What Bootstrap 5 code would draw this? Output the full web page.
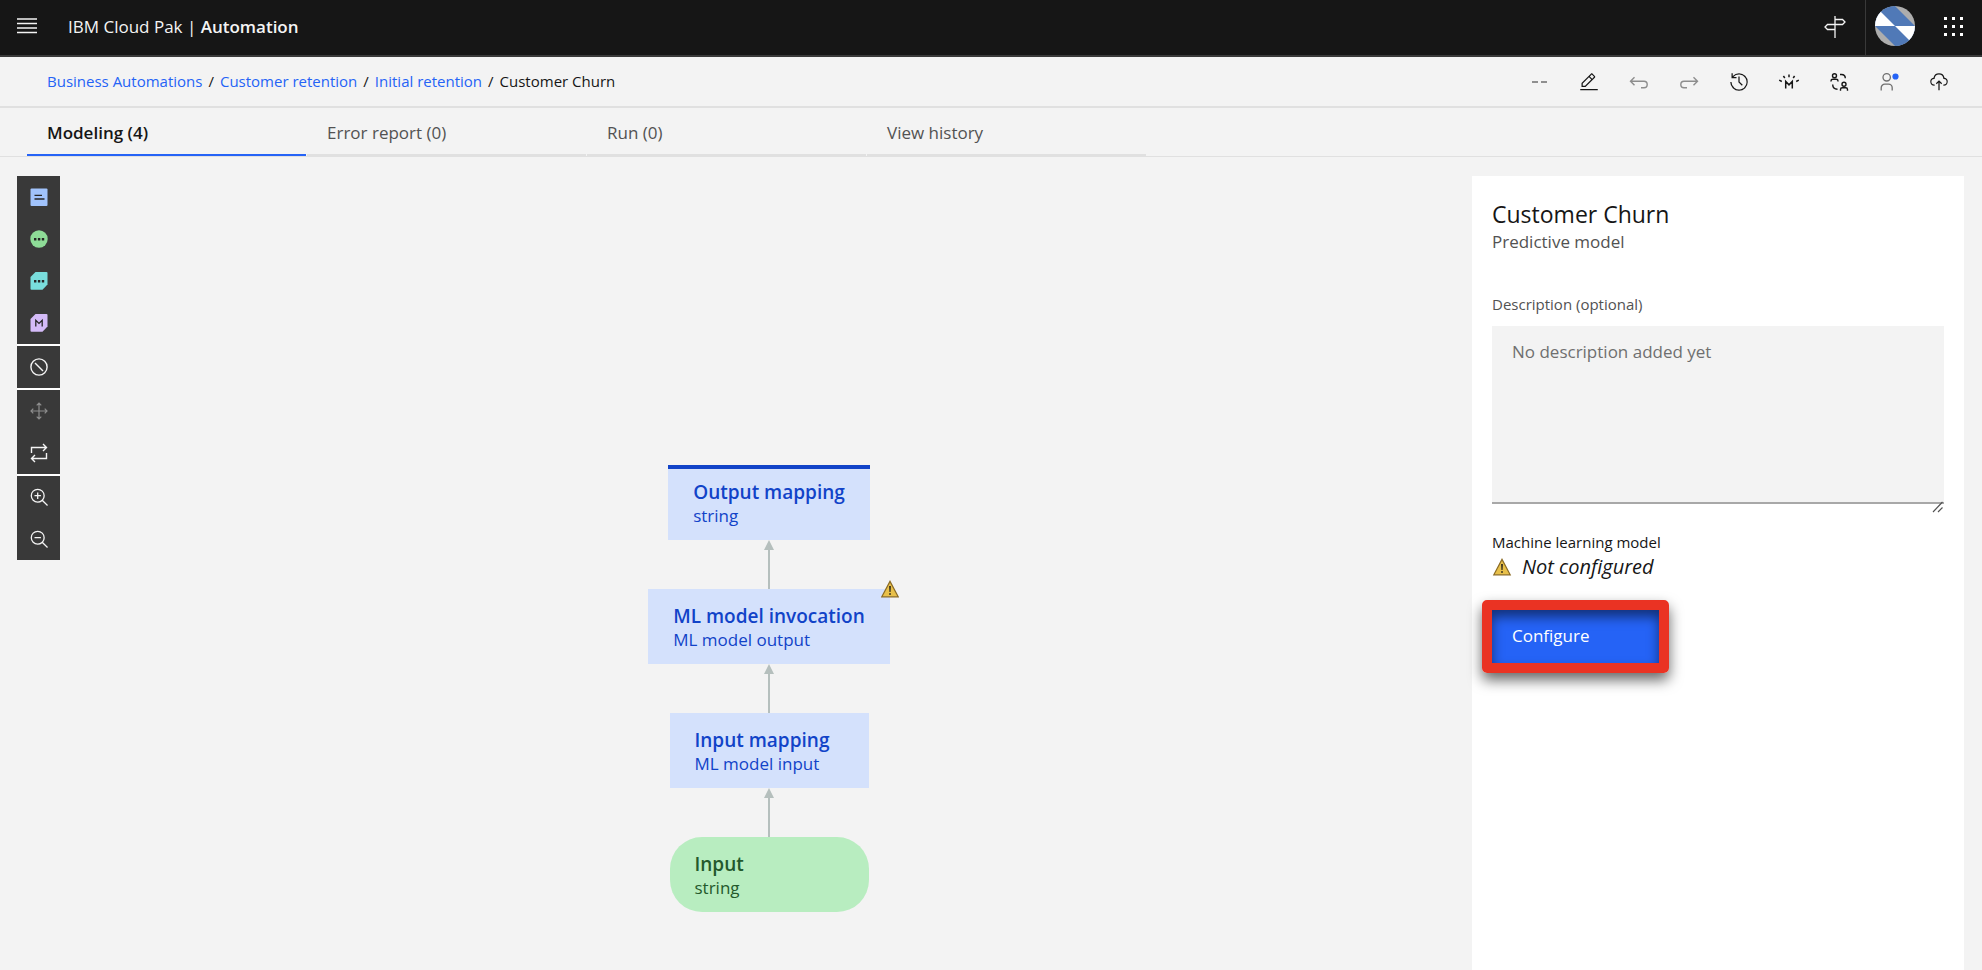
<!DOCTYPE html>
<html lang="en">
<head>
<meta charset="utf-8">
<meta name="viewport" content="width=device-width, initial-scale=1">
<title>Customer Churn - Automation</title>
<link href="https://cdn.jsdelivr.net/npm/bootstrap@5.3.0/dist/css/bootstrap.min.css" rel="stylesheet">
<script src="https://cdn.jsdelivr.net/npm/bootstrap@5.3.0/dist/js/bootstrap.bundle.min.js" defer></script>
<style>
:root { --ink: #161616; --muted: #525252; --line: #e0e0e0; --blue: #2563f6; --dark-blue: #1143c8; }
body { font-family: "Open Sans", "Noto Sans", sans-serif; font-size: 17px; line-height: 24px; color: var(--ink); background: #f3f3f3; }
svg { display: block; flex: none; }
.stroked { fill: none; stroke: currentColor; }
.icon-btn { border: 0; padding: 0; background: none; color: inherit; display: flex; align-items: center; justify-content: center; }
.icon-btn:disabled { color: #8d8d8d; }

.topbar { background: #161616; color: #f4f4f4; border-bottom: 2px solid #393939; }
.topbar .icon-btn { width: 60px; height: 55px; padding-bottom: 3px; }
.topbar .menu-btn { width: 54px; }
.topbar .avatar-btn { border-left: 1px solid #393939; width: 59px; }
.topbar .apps-btn { width: 58px; }
.product { color: #f4f4f4; padding: 0 14px 2px; }
.product b { font-weight: 600; }

.crumbs { height: 51px; border-bottom: 2px solid var(--line); padding: 0 18px 0 47px; }
.breadcrumb { font-size: 15px; padding-bottom: 2px; --bs-breadcrumb-item-padding-x: 6px; --bs-breadcrumb-divider-color: #161616; --bs-breadcrumb-item-active-color: #161616; }
.breadcrumb a { color: var(--blue); text-decoration: none; }
.actions .icon-btn, .actions .no-value { width: 50px; height: 40px; }
.no-value { color: #6f6f6f; }

.tabbar { border-bottom: 1px solid var(--line); padding-left: 27px; gap: 1px; }
.tabbar .nav-link { width: 279px; height: 48px; background: none; border-radius: 0; border: 0; border-bottom: 2px solid var(--line); color: var(--muted); text-align: left; padding: 4px 20px 0; }
.tabbar .nav-link.active { color: var(--ink); font-weight: 600; border-bottom-color: var(--blue); }

.work { padding: 19px 18px 0 17px; }
.palette { width: 43px; background: #fff; gap: 2px; margin-right: 6px; }
.palette > div { background: #393939; color: #f4f4f4; }
.palette .icon-btn { width: 43px; height: 42px; }

.canvas { padding-bottom: 58px; }
.node { padding: 15px 25px 0; height: 75px; min-width: 199px; background: #d4e1fc; color: var(--dark-blue); }
.node strong { display: block; font-size: 19px; font-weight: 600; }
.node-output { border-top: 4px solid var(--dark-blue); padding-top: 11px; }
.node-input { background: #b8edc0; color: #24592c; border-radius: 32px; }
.node-warning { position: absolute; top: -9px; right: -9px; }

.inspector { width: 492px; background: #fff; padding: 22px 20px; }
.inspector h1 { font-size: 23px; line-height: 32px; margin: 0; }
.quiet { color: var(--muted); }
.caption { font-size: 15px; line-height: 20px; }
.desc-label { margin: 40px 0 12px; }
.desc, .desc:focus { background: #f3f3f3; border: 0; border-bottom: 2px solid #a8a8a8; border-radius: 0; height: 178px; padding: 14px 20px; font-size: 17px; line-height: 24px; resize: none; box-shadow: none; }
.desc::placeholder { color: #6f6f6f; }
.grip { position: absolute; right: 0; bottom: -9px; color: #525252; }
.not-set { font-size: 20px; line-height: 30px; gap: 10px; }
.configure { position: relative; background: var(--blue); color: #fff; border: 0; width: 167px; height: 53px; text-align: left; padding: 0 20px 2px; margin-top: 28px; }
/* call-out frame round the button */
.configure::after { content: ""; position: absolute; inset: -10px; border: 10px solid #ea3323; border-radius: 5px; box-shadow: 0 7px 14px rgba(0,0,0,.6), inset 0 7px 12px rgba(0,0,0,.5); pointer-events: none; }
</style>
</head>
<body class="vh-100 d-flex flex-column overflow-hidden">

<svg width="0" height="0" class="position-absolute" aria-hidden="true">
  <symbol id="warning" viewBox="0 0 18 18"><path d="M9 1.4 17.2 16.8H.8Z" fill="#e8c04a" stroke="#8b6b24" stroke-width="1.2"/><path d="M8.2 6h1.6l-.3 6h-1zM8.2 13.2h1.6v1.6H8.2z" fill="#161616"/></symbol>
</svg>

<header class="topbar d-flex align-items-center">
  <button class="icon-btn menu-btn" type="button" aria-label="Menu"><svg class="stroked" width="20" height="16" stroke-width="1.6"><path d="M0 1h20M0 5.500h20M0 10h20M0 14.500h20"/></svg></button>
  <a class="product text-decoration-none me-auto" href="#">IBM Cloud Pak | <b>Automation</b></a>
  <button class="icon-btn" type="button" aria-label="Guide"><svg class="stroked" width="22" height="24" stroke-width="1.3"><path d="M11 2v22M11 5.5h7.5l2.5 2.5-2.5 2.5H11M11 10.5H3.5L1 13l2.5 2.5H11"/></svg></button>
  <button class="icon-btn avatar-btn" type="button" aria-label="Account">
    <svg width="40" height="40" viewBox="-20 -20 40 40"><clipPath id="disc"><circle r="20"/></clipPath><g clip-path="url(#disc)"><path fill="#adadad" d="M-20-20h40v40h-40z"/><path fill="#5079b7" d="M-20-20H0L20 0H-20zM-20 0H20V20H0z"/><path fill="#fff" d="M-20-20 0 0H-20zM0 0H20V20z"/></g></svg>
  </button>
  <button class="icon-btn apps-btn" type="button" aria-label="App switcher"><svg width="20" height="20" fill="#fff"><path d="M1 1h3v3H1zM9 1h3v3H9zM17 1h3v3h-3zM1 9h3v3H1zM9 9h3v3H9zM17 9h3v3h-3zM1 17h3v3H1zM9 17h3v3H9zM17 17h3v3h-3z"/></svg></button>
</header>

<div class="crumbs d-flex align-items-center justify-content-between">
  <nav aria-label="breadcrumb">
    <ol class="breadcrumb mb-0">
      <li class="breadcrumb-item"><a href="#">Business Automations</a></li>
      <li class="breadcrumb-item"><a href="#">Customer retention</a></li>
      <li class="breadcrumb-item"><a href="#">Initial retention</a></li>
      <li class="breadcrumb-item active" aria-current="page">Customer Churn</li>
    </ol>
  </nav>
  <div class="actions d-flex">
    <span class="no-value d-flex align-items-center justify-content-center"><svg class="stroked" width="16" height="2" stroke-width="1.4"><path d="M1 1h6M10 1h6"/></svg></span>
    <button class="icon-btn" type="button" aria-label="Edit"><svg width="20" height="20" viewBox="0 0 32 32" fill="currentColor"><path d="M2 27h28v2H2zM25.4 9c.8-.8.8-2 0-2.800l-3.600-3.600c-.8-.8-2-.8-2.800 0l-15 15V24h6.400l15-15zM20.400 4 24 7.600l-3 3L17.400 7l3-3zM6 22v-3.600l10-10 3.600 3.600-10 10H6z"/></svg></button>
    <button class="icon-btn" type="button" aria-label="Undo" disabled><svg class="stroked" width="20" height="20" stroke-width="1.4"><path d="M5.500 5.300l-4 4 4 4M1.500 9.300H15a3.200 3.200 0 0 1 0 6.400h-3"/></svg></button>
    <button class="icon-btn" type="button" aria-label="Redo" disabled><svg class="stroked" width="20" height="20" stroke-width="1.4"><path d="M14.500 5.300l4 4-4 4M18.500 9.300H5a3.200 3.200 0 0 0 0 6.400h3"/></svg></button>
    <button class="icon-btn" type="button" aria-label="History"><svg width="20" height="20" viewBox="0 0 32 32" fill="currentColor"><path d="M20.590 22 15 16.410V7h2v8.580l5 5.010zM16 2A13.940 13.940 0 0 0 6 6.230V2H4v8h8V8H7.080A12 12 0 1 1 4 16H2A14 14 0 1 0 16 2z"/></svg></button>
    <button class="icon-btn" type="button" aria-label="Machine learning"><svg class="stroked" width="22" height="20" stroke-width="1.5"><path d="M7.700 16.500V9.400L11 12.800l3.300-3.400v7.100M11 2.500v2.700M5.400 4l1.400 2M16.600 4l-1.400 2M1.200 8.200l2.600 1.300M20.800 8.200l-2.600 1.300"/></svg></button>
    <button class="icon-btn" type="button" aria-label="Collaborate"><svg class="stroked" width="20" height="20" stroke-width="1.4"><circle cx="5.500" cy="3.800" r="2"/><path d="M2 9.500V9c0-1 .8-1.700 1.800-1.700h3.400C8.200 7.300 9 8 9 9v.5"/><circle cx="15" cy="12.300" r="2"/><path d="M11.500 18.800V17.500c0-1 .8-1.700 1.800-1.700h3.400c1 0 1.800.7 1.800 1.700v1.300M11 2.500h1.500c2.200 0 3.800 1.500 3.800 3.800M3.700 12.500c0 2.700 1.600 4.700 4.800 4.700"/></svg></button>
    <button class="icon-btn" type="button" aria-label="Users"><svg class="stroked" width="20" height="20" stroke-width="1.3"><g stroke="#6f6f6f"><circle cx="7.700" cy="5.300" r="3.700"/><path d="M2.200 18.500V15.800a3.600 3.600 0 0 1 3.600-3.600h3.800a3.600 3.600 0 0 1 3.600 3.600v2.700"/></g><circle cx="16.500" cy="4.500" r="3.100" fill="#2563f6" stroke="none"/></svg></button>
    <button class="icon-btn" type="button" aria-label="Publish"><svg width="20" height="20" viewBox="0 0 32 32" fill="currentColor"><path d="m11 18 1.410 1.410L15 16.830V29h2V16.830l2.590 2.580L21 18l-5-5zM23.500 22H23v-2h.5a4.500 4.500 0 0 0 .36-9L23 11l-.1-.82a7 7 0 0 0-13.880 0L9 11l-.86 0a4.500 4.500 0 0 0 .36 9H9v2h-.5A6.500 6.500 0 0 1 7.200 9.140a9 9 0 0 1 17.600 0A6.500 6.500 0 0 1 23.500 22z"/></svg></button>
  </div>
</div>

<nav class="tabbar nav" role="tablist">
  <button class="nav-link active" type="button" role="tab" aria-selected="true">Modeling (4)</button>
  <button class="nav-link" type="button" role="tab">Error report (0)</button>
  <button class="nav-link" type="button" role="tab">Run (0)</button>
  <button class="nav-link" type="button" role="tab">View history</button>
</nav>

<main class="work d-flex flex-grow-1">
  <div class="palette d-flex flex-column align-self-start">
    <div>
      <button class="icon-btn" type="button" aria-label="Decision"><svg width="18" height="18"><rect x=".5" y=".5" width="17" height="17.500" rx="1" fill="#a1c3fc"/><path d="M4.500 7.300h7.500M4.500 11h10" stroke="#262626" stroke-width="1.3"/></svg></button>
      <button class="icon-btn" type="button" aria-label="Input data"><svg width="18" height="18"><circle cx="9" cy="9" r="8.700" fill="#8edc97"/><path d="M4 8h2.400v2.400H4zM7.900 8h2.400v2.400H7.900zM11.800 8h2.400v2.400h-2.400z" fill="#262626"/></svg></button>
      <button class="icon-btn" type="button" aria-label="Function"><svg width="18" height="18"><path d="M5.500 0H16.500a1 1 0 0 1 1 1V12.500L12.500 17.800H1.500a1 1 0 0 1-1-1V5z" fill="#79dddc"/><path d="M4 8h2.400v2.400H4zM7.900 8h2.400v2.400H7.900zM11.800 8h2.400v2.400h-2.400z" fill="#262626"/></svg></button>
      <button class="icon-btn" type="button" aria-label="Predictive model"><svg width="18" height="18"><path d="M5.500 0H16.500a1 1 0 0 1 1 1V12.500L12.500 17.800H1.500a1 1 0 0 1-1-1V5z" fill="#d4bbf8"/><path d="M5.800 12.500V6.200L9 9.400l3.200-3.200v6.300" fill="none" stroke="#262626" stroke-width="1.3"/></svg></button>
    </div>
    <div>
      <button class="icon-btn" type="button" aria-label="Disable"><svg class="stroked" width="18" height="18" stroke-width="1.4"><circle cx="9" cy="9" r="8.100"/><path d="M5 5l8 8"/></svg></button>
    </div>
    <div>
      <button class="icon-btn" type="button" aria-label="Move" disabled><svg class="stroked" width="18" height="18" stroke-width="1.2"><path d="M9 1v16M1 9h16M6.700 3.300 9 1l2.300 2.300M6.700 14.700 9 17l2.300-2.300M3.300 6.700 1 9l2.300 2.300M14.700 6.700 17 9l-2.300 2.300"/></svg></button>
      <button class="icon-btn" type="button" aria-label="Swap"><svg class="stroked" width="18" height="20" stroke-width="1.4"><path d="M1.500 10V4.500h15M13 1l3.500 3.500L13 8M16.500 10v5.500h-15M5 12l-3.500 3.500L5 19"/></svg></button>
    </div>
    <div>
      <button class="icon-btn" type="button" aria-label="Zoom in"><svg width="18" height="18" viewBox="1 1 28 28" fill="currentColor"><path d="M18 12h-4V8h-2v4H8v2h4v4h2v-4h4zM21.450 20A10.860 10.860 0 0 0 24 13a11 11 0 1 0-11 11 10.860 10.860 0 0 0 7-2.550L27.590 29 29 27.590zM13 22a9 9 0 1 1 9-9 9 9 0 0 1-9 9z"/></svg></button>
      <button class="icon-btn" type="button" aria-label="Zoom out"><svg width="18" height="18" viewBox="1 1 28 28" fill="currentColor"><path d="M18 12H8v2h10zM21.450 20A10.860 10.860 0 0 0 24 13a11 11 0 1 0-11 11 10.860 10.860 0 0 0 7-2.550L27.590 29 29 27.590zM13 22a9 9 0 1 1 9-9 9 9 0 0 1-9 9z"/></svg></button>
    </div>
  </div>

  <section class="canvas d-flex flex-column flex-grow-1 align-items-center justify-content-end" aria-label="Decision model">
    <div class="node node-output"><strong>Output mapping</strong>string</div>
    <svg width="10" height="49" fill="#b5bfbd"><path d="M5 0l5 10H6v39H4V10H0z"/></svg>
    <div class="node position-relative"><strong>ML model invocation</strong>ML model output<svg class="node-warning" width="18" height="18"><use href="#warning"/></svg></div>
    <svg width="10" height="49" fill="#b5bfbd"><path d="M5 0l5 10H6v39H4V10H0z"/></svg>
    <div class="node"><strong>Input mapping</strong>ML model input</div>
    <svg width="10" height="49" fill="#b5bfbd"><path d="M5 0l5 10H6v39H4V10H0z"/></svg>
    <div class="node node-input"><strong>Input</strong>string</div>
  </section>

  <aside class="inspector flex-shrink-0">
    <h1 class="fw-normal">Customer Churn</h1>
    <p class="quiet mb-0">Predictive model</p>
    <label class="caption quiet desc-label d-block" for="description">Description (optional)</label>
    <div class="position-relative">
      <textarea class="desc form-control" id="description" placeholder="No description added yet"></textarea>
      <svg class="grip stroked" width="12" height="12" stroke-width="1.2"><path d="M1 11 10.500 1M6 11l4.500-4.500"/></svg>
    </div>
    <div class="caption mt-4 pt-1">Machine learning model</div>
    <div class="not-set d-flex align-items-center fst-italic"><svg width="20" height="18"><use href="#warning"/></svg>Not configured</div>
    <button class="configure" type="button">Configure</button>
  </aside>
</main>
</body>
</html>
